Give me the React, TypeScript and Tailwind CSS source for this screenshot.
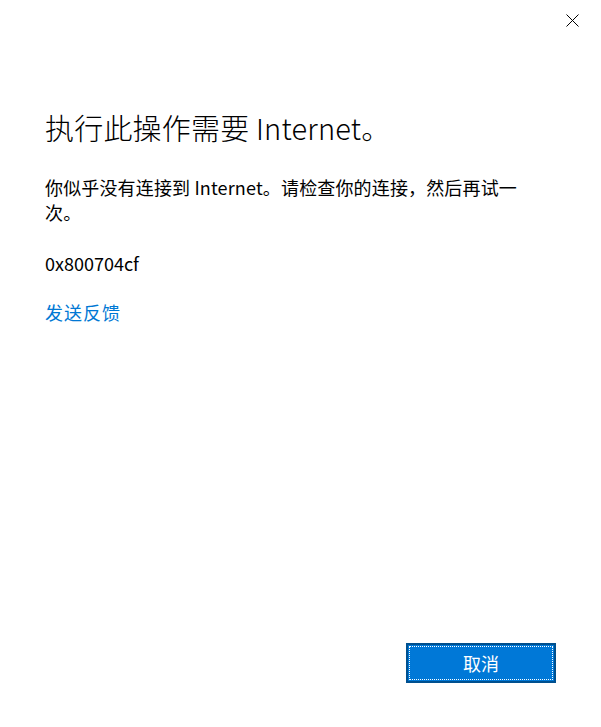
import React from "react";

export default function App() {
  const font = { fontFamily: '"Noto Sans CJK SC", "Noto Sans", sans-serif' };
  return (
    <div
      className="relative flex h-[727px] w-[601px] flex-col bg-white text-black"
      style={font}
    >
      <button className="absolute right-[15px] top-[6px] flex h-[28px] w-[28px] items-center justify-center">
        <svg width="13" height="13" viewBox="0 0 13 13" fill="none">
          <path d="M0.5 0.5 L12.5 12.5 M12.5 0.5 L0.5 12.5" stroke="#000" strokeWidth="1" />
        </svg>
      </button>
      <div className="flex flex-col pl-[45px] pt-[109px] pr-[60px]">
        <h1 className="text-[29px] font-light leading-[36px] tracking-[0.2px]">
          执行此操作需要 Internet。
        </h1>
        <p className="mt-[30px] max-w-[496px] text-[18px] leading-[25px] tracking-[0.15px]">
          你似乎没有连接到 Internet。请检查你的连接，然后再试一次。
        </p>
        <p className="mt-[26px] text-[18px] leading-[25px]">0x800704cf</p>
        <a className="mt-[24px] w-fit text-[18px] leading-[25px] tracking-[1px] text-[#0078d4]">
          发送反馈
        </a>
      </div>
      <div className="mt-auto flex justify-end pb-[44px] pr-[45px]">
        <button className="flex h-[40px] w-[150px] border-2 border-[#00508f] bg-[#0078d7] p-[1px]">
          <span className="flex flex-1 items-center justify-center border border-dotted border-white text-[18px] leading-none text-white">
            取消
          </span>
        </button>
      </div>
    </div>
  );
}
